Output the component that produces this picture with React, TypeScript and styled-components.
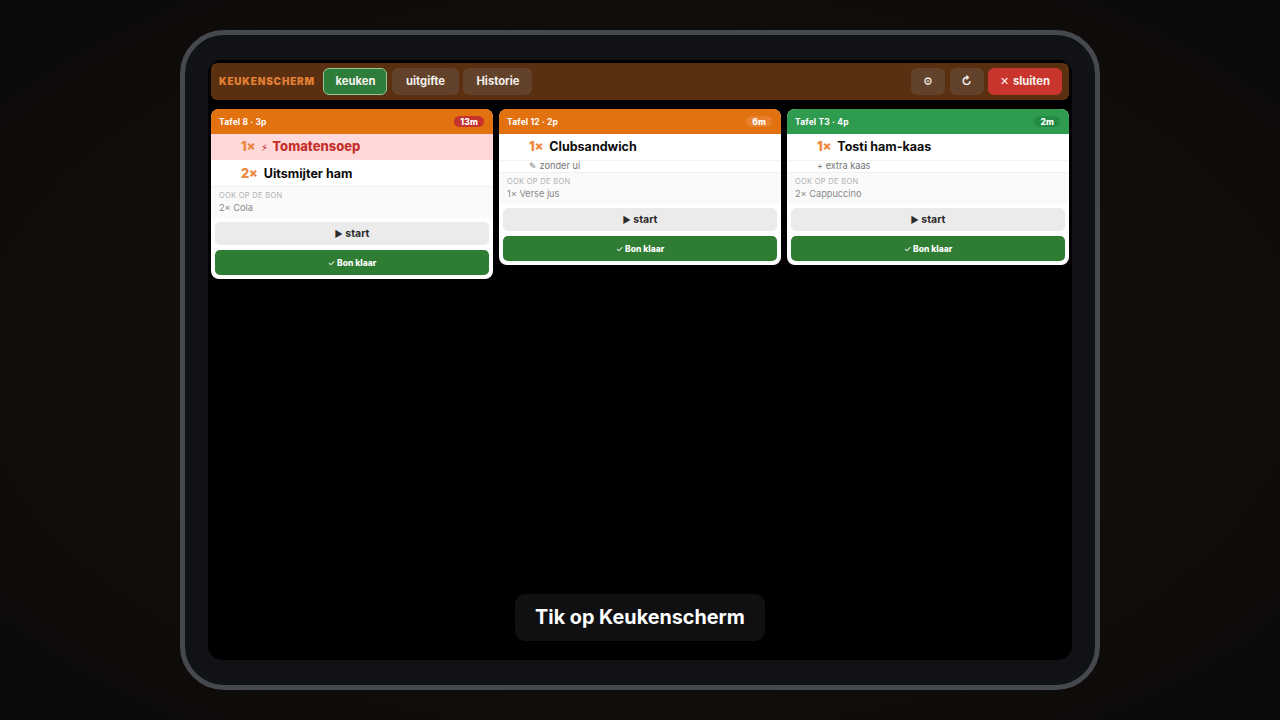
import { createGlobalStyle, styled } from 'styled-components';

const GlobalStyle = createGlobalStyle`
  html, body {
    margin: 0;
    height: 100%;
    background: #0d0b09;
  }
  * { box-sizing: border-box; }
  body { font-family: Inter, "Noto Sans", "Liberation Sans", sans-serif; }
`;

const Page = styled.div`
  width: 1280px;
  height: 720px;
  overflow: hidden;
  display: flex;
  align-items: center;
  justify-content: center;
  background: radial-gradient(ellipse at 50% 50%, #17100b 0%, #110d0a 60%, #0b0a09 100%);
`;

const Tablet = styled.div`
  width: 920px;
  height: 660px;
  padding: 25px 23px 25px;
  border: 5px solid #45494f;
  border-radius: 44px;
  background: #101216;
  display: flex;
`;

const Screen = styled.div`
  position: relative;
  flex: 1;
  padding: 3px 3px;
  border-radius: 14px;
  background: #000;
`;

const TopBar = styled.header`
  height: 37px;
  padding: 0 7px 0 8px;
  border-radius: 6px;
  background: #5a3010;
  display: flex;
  align-items: center;
  gap: 4.5px;
`;

const Brand = styled.div`
  margin-right: 4px;
  padding-bottom: 1px;
  font-size: 10px;
  font-weight: 900;
  letter-spacing: 0.8px;
  color: #e07f35;
`;

const NavButton = styled.button<{ $width: number; $active?: boolean; $danger?: boolean }>`
  height: 27px;
  width: ${(p) => p.$width}px;
  padding: 0 0 1px;
  border-radius: 6px;
  border: ${(p) => (p.$active ? '1px solid #8fc79a' : 'none')};
  background: ${(p) => (p.$active ? '#2e7d3a' : p.$danger ? '#c9352d' : '#63422c')};
  color: #f6f1ec;
  font-family: inherit;
  font-size: 11.25px;
  font-weight: 700;
  display: flex;
  align-items: center;
  justify-content: center;
  gap: 4px;
`;

const Glyph = styled.span`
  font-weight: 400;
`;

const PlayGlyph = styled.span`
  font-size: 9px;
  font-weight: 400;
`;

const Spacer = styled.div`
  flex: 1;
`;

const Board = styled.main`
  margin-top: 9px;
  display: grid;
  grid-template-columns: repeat(3, 282px);
  gap: 6px;
  align-items: start;
`;

const Card = styled.article`
  border-radius: 8px;
  overflow: hidden;
  background: #fff;
  padding-bottom: 4px;
`;

const CardHead = styled.div<{ $tone: 'orange' | 'green' }>`
  height: 25px;
  padding: 0 9px 0 8px;
  background: ${(p) => (p.$tone === 'green' ? '#2f9b4f' : '#e2710f')};
  color: #fff;
  display: flex;
  align-items: center;
  justify-content: space-between;
  font-size: 8.5px;
  font-weight: 700;
  letter-spacing: 0.15px;
`;

const Timer = styled.span<{ $tone: 'red' | 'orange' | 'green' }>`
  height: 11px;
  padding: 0 6px;
  border-radius: 6px;
  display: flex;
  align-items: center;
  font-size: 8.5px;
  font-weight: 800;
  background: ${(p) => ({ red: '#c5332c', orange: '#e8802e', green: '#258a45' })[p.$tone]};
`;

const ItemRow = styled.div<{ $rush?: boolean; $compact?: boolean }>`
  height: 26px;
  padding: 0 0 ${(p) => (p.$compact ? '2px' : '0')} 30px;
  display: flex;
  align-items: center;
  gap: 6px;
  background: ${(p) => (p.$rush ? '#ffd9d9' : '#fff')};
  color: ${(p) => (p.$rush ? '#c5302c' : '#0c0c0c')};
  font-size: ${(p) => (p.$rush ? '13px' : '12.5px')};
  font-weight: ${(p) => (p.$rush ? 800 : 700)};
`;

const Qty = styled.span`
  font-size: 12.5px;
  font-weight: 900;
  color: #ec8a45;
`;

const Bolt = styled.span`
  margin-right: 4px;
  font-size: 10px;
  font-weight: 400;
`;

const Note = styled.div`
  height: 12px;
  padding-left: 30px;
  border-top: 1px solid #f4f4f4;
  font-size: 9.2px;
  line-height: 9px;
  color: #747474;
`;

const Extras = styled.div`
  height: 32px;
  padding: 3px 8px 0;
  border-top: 1px solid #f0f0f0;
  background: #fafafa;
  font-size: 9.2px;
  color: #888;
`;

const ExtrasLabel = styled.div`
  font-size: 7.5px;
  line-height: 11px;
  letter-spacing: 0.3px;
  color: #b0b0b0;
`;

const ExtrasLine = styled.div`
  line-height: 14px;
`;

const Actions = styled.div`
  padding: 4px 4px 0;
  display: flex;
  flex-direction: column;
  gap: 5px;
`;

const StartButton = styled.button`
  height: 23px;
  padding: 0;
  border: none;
  border-radius: 5px;
  background: #ebebeb;
  color: #2b2b2b;
  font-family: inherit;
  font-size: 10.5px;
  font-weight: 700;
`;

const DoneButton = styled.button`
  height: 25px;
  padding: 0;
  border: none;
  border-radius: 5px;
  background: #2e7d32;
  color: #fff;
  font-family: inherit;
  font-size: 8.5px;
  font-weight: 800;
`;

const Hint = styled.div`
  position: absolute;
  left: 307px;
  bottom: 19px;
  width: 250px;
  height: 47px;
  padding-bottom: 2px;
  border-radius: 10px;
  background: #101013;
  color: #fff;
  font-size: 19.8px;
  font-weight: 700;
  display: flex;
  align-items: center;
  justify-content: center;
`;

type Order = {
  title: string;
  tone: 'orange' | 'green';
  time: string;
  timeTone: 'red' | 'orange' | 'green';
  items: { qty: string; name: string; rush?: boolean }[];
  note?: string;
  extra: string;
};

const orders: Order[] = [
  {
    title: 'Tafel 8 · 3p',
    tone: 'orange',
    time: '13m',
    timeTone: 'red',
    items: [
      { qty: '1×', name: 'Tomatensoep', rush: true },
      { qty: '2×', name: 'Uitsmijter ham' },
    ],
    extra: '2× Cola',
  },
  {
    title: 'Tafel 12 · 2p',
    tone: 'orange',
    time: '6m',
    timeTone: 'orange',
    items: [{ qty: '1×', name: 'Clubsandwich' }],
    note: '✎ zonder ui',
    extra: '1× Verse jus',
  },
  {
    title: 'Tafel T3 · 4p',
    tone: 'green',
    time: '2m',
    timeTone: 'green',
    items: [{ qty: '1×', name: 'Tosti ham-kaas' }],
    note: '+ extra kaas',
    extra: '2× Cappuccino',
  },
];

export default function App() {
  return (
    <Page>
      <GlobalStyle />
      <Tablet>
        <Screen>
          <TopBar>
            <Brand>KEUKENSCHERM</Brand>
            <NavButton $width={64} $active>keuken</NavButton>
            <NavButton $width={67}>uitgifte</NavButton>
            <NavButton $width={69}>Historie</NavButton>
            <Spacer />
            <NavButton $width={34}><Glyph>⚙</Glyph></NavButton>
            <NavButton $width={34}>↻</NavButton>
            <NavButton $width={74} $danger><Glyph>✕</Glyph> sluiten</NavButton>
          </TopBar>
          <Board>
            {orders.map((order) => (
              <Card key={order.title}>
                <CardHead $tone={order.tone}>
                  <span>{order.title}</span>
                  <Timer $tone={order.timeTone}>{order.time}</Timer>
                </CardHead>
                {order.items.map((item, i) => (
                  <ItemRow key={item.name} $rush={item.rush} $compact={i === 0}>
                    <Qty>{item.qty}</Qty>
                    <span>
                      {item.rush && <Bolt>⚡︎</Bolt>}
                      {item.name}
                    </span>
                  </ItemRow>
                ))}
                {order.note && <Note>{order.note}</Note>}
                <Extras>
                  <ExtrasLabel>OOK OP DE BON</ExtrasLabel>
                  <ExtrasLine>{order.extra}</ExtrasLine>
                </Extras>
                <Actions>
                  <StartButton><PlayGlyph>▶</PlayGlyph> start</StartButton>
                  <DoneButton><Glyph>✓</Glyph> Bon klaar</DoneButton>
                </Actions>
              </Card>
            ))}
          </Board>
          <Hint>Tik op Keukenscherm</Hint>
        </Screen>
      </Tablet>
    </Page>
  );
}
